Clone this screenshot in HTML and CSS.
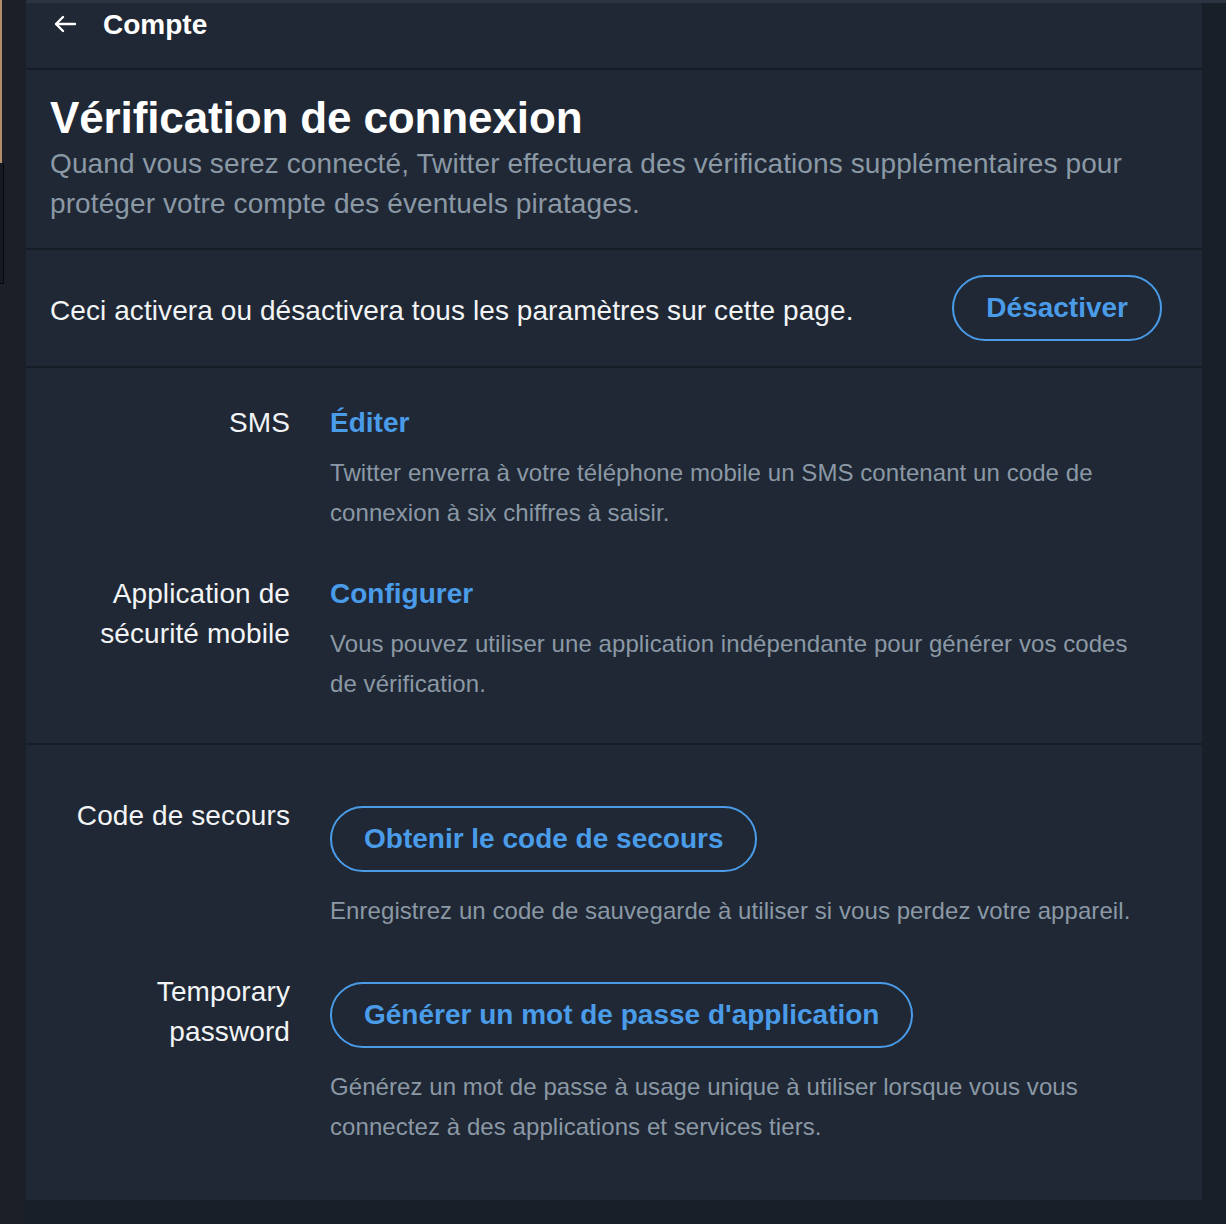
FILE: index.html
```html
<!DOCTYPE html>
<html lang="fr">
<head>
<meta charset="utf-8">
<title>Vérification de connexion</title>
<link rel="stylesheet" href="styles.css">
</head>
<body>
<div class="edge"><div class="edge-tan"></div><div class="edge-box"></div></div>
<div class="topband"></div>
<main class="panel">
  <header class="header">
    <svg class="back" width="24" height="18" viewBox="0 0 24 18" aria-hidden="true">
      <path d="M22 9H3M10 2L3 9l7 7" fill="none" stroke="#ffffff" stroke-width="2.4" stroke-linecap="round" stroke-linejoin="round"/>
    </svg>
    <span class="header-title">Compte</span>
  </header>
  <section class="intro">
    <h1 class="title">Vérification de connexion</h1>
    <p class="subtitle">Quand vous serez connecté, Twitter effectuera des vérifications supplémentaires pour protéger votre compte des éventuels piratages.</p>
  </section>
  <section class="toggle">
    <p class="toggle-text">Ceci activera ou désactivera tous les paramètres sur cette page.</p>
    <button class="pill">Désactiver</button>
  </section>
  <section class="group group-methods">
    <div class="row">
      <div class="label">SMS</div>
      <div class="content">
        <a class="link">Éditer</a>
        <p class="desc">Twitter enverra à votre téléphone mobile un SMS contenant un code de connexion à six chiffres à saisir.</p>
      </div>
    </div>
    <div class="row">
      <div class="label">Application de sécurité mobile</div>
      <div class="content">
        <a class="link">Configurer</a>
        <p class="desc">Vous pouvez utiliser une application indépendante pour générer vos codes de vérification.</p>
      </div>
    </div>
  </section>
  <section class="group group-codes">
    <div class="row">
      <div class="label">Code de secours</div>
      <div class="content">
        <button class="pill pill-row">Obtenir le code de secours</button>
        <p class="desc desc-after-btn">Enregistrez un code de sauvegarde à utiliser si vous perdez votre appareil.</p>
      </div>
    </div>
    <div class="row">
      <div class="label">Temporary<br>password</div>
      <div class="content">
        <button class="pill pill-row">Générer un mot de passe d'application</button>
        <p class="desc desc-after-btn">Générez un mot de passe à usage unique à utiliser lorsque vous vous connectez à des applications et services tiers.</p>
      </div>
    </div>
  </section>
</main>
</body>
</html>
```
FILE: styles.css
```css
* { box-sizing: border-box; }
html, body {
  margin: 0;
  padding: 0;
  background: #191f28;
}
body {
  font-family: "Liberation Sans", Arial, Helvetica, sans-serif;
  color: #ffffff;
  width: 1226px;
  height: 1224px;
  position: relative;
  overflow: hidden;
}
.edge {
  position: absolute;
  left: 0;
  top: 0;
  width: 26px;
  height: 1224px;
  background: #1a1f28;
}
.edge-tan {
  position: absolute;
  left: 0;
  top: 0;
  width: 2px;
  height: 163px;
  background: #b48d6c;
}
.edge-box {
  position: absolute;
  left: 0;
  top: 163px;
  width: 4px;
  height: 121px;
  background: #141923;
  border-right: 1px solid #05070b;
  border-bottom: 1px solid #05070b;
}
.topband {
  margin-left: 26px;
  height: 3px;
  background: #2b3440;
}
.panel {
  margin-left: 26px;
  width: 1176px;
  height: 1197px;
  background: #1f2834;
}
.header {
  height: 67px;
  padding: 2px 0 0 27px;
  display: flex;
  align-items: flex-start;
  border-bottom: 2px solid #161d26;
}
.back {
  margin-top: 10px;
}
.header-title {
  margin-left: 26px;
  font-size: 28px;
  line-height: 40px;
  font-weight: 700;
}
.intro {
  padding: 21px 40px 24px 24px;
  border-bottom: 2px solid #161d26;
}
.title {
  margin: 0;
  font-size: 44px;
  line-height: 53px;
  font-weight: 700;
  letter-spacing: -0.12px;
}
.subtitle {
  margin: 0;
  font-size: 28px;
  line-height: 40px;
  color: #8b98a5;
  letter-spacing: 0.1px;
}
.toggle {
  height: 118px;
  padding: 0 40px 0 24px;
  display: flex;
  align-items: center;
  justify-content: space-between;
  border-bottom: 2px solid #161d26;
}
.toggle-text {
  margin: 0;
  padding-top: 6px;
  font-size: 28px;
  line-height: 40px;
  color: #f2f4f6;
  letter-spacing: 0.08px;
}
.pill {
  height: 66px;
  padding: 0 32px;
  border: 2px solid #4a9ce9;
  border-radius: 33px;
  background: transparent;
  color: #4a9ce9;
  font-family: inherit;
  font-size: 28px;
  font-weight: 700;
  line-height: 1;
  display: inline-flex;
  align-items: center;
  justify-content: center;
}
.group {
  display: flex;
  flex-direction: column;
  gap: 41px;
}
.group-methods {
  padding: 35px 62px 39px 24px;
  border-bottom: 2px solid #161d26;
}
.group-codes {
  padding: 51px 62px 54px 24px;
}
.row {
  display: flex;
  gap: 40px;
}
.label {
  width: 240px;
  flex: none;
  text-align: right;
  font-size: 28px;
  line-height: 40px;
  color: #f2f4f6;
  letter-spacing: 0.1px;
}
.content {
  flex: 1;
  min-width: 0;
  display: flex;
  flex-direction: column;
  align-items: flex-start;
}
.link {
  font-size: 28px;
  line-height: 40px;
  font-weight: 700;
  color: #4a9ce9;
}
.desc {
  margin: 10px 0 0;
  font-size: 24px;
  line-height: 40px;
  color: #8b98a5;
  letter-spacing: 0.07px;
}
.pill-row {
  margin-top: 10px;
}
.desc-after-btn {
  margin-top: 19px;
}
```
